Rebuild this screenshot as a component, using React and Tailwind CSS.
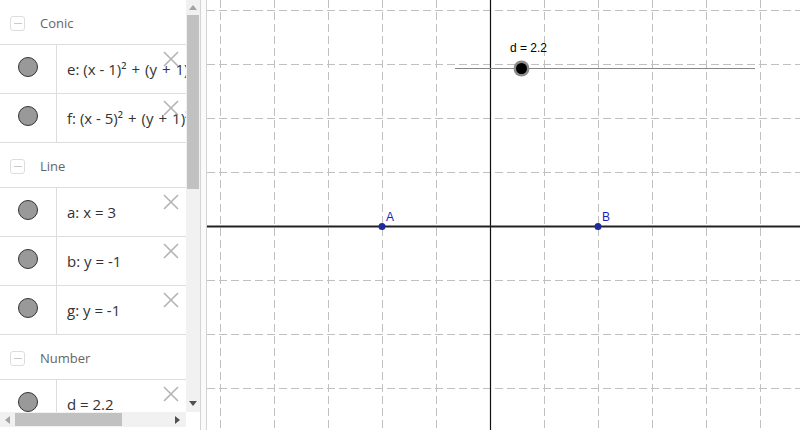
import React from 'react';

const FONT = { fontFamily: '"Open Sans", "Noto Sans", sans-serif' };

const GroupHeader = ({ title }) => (
    <div className="flex h-[45px] items-center border-b border-[#ddd] pt-[3px]">
        <div className="ml-[10px] flex h-[15px] w-[15px] items-center justify-center rounded-[3px] border border-[#ddd]">
            <div className="h-[1.5px] w-[8px] bg-[#c8c8c8]" />
        </div>
        <span className="ml-[15px] text-[13px] text-[#666]">{title}</span>
    </div>
);

const CloseIcon = () => (
    <svg className="absolute right-[7px] top-[6px]" width="16" height="16" viewBox="0 0 16 16">
        <path d="M1 1 L15 15 M15 1 L1 15" stroke="#b4b4b4" strokeWidth="1.6" fill="none" />
    </svg>
);

const ItemRow = ({ label }) => (
    <div className="relative flex h-[49px] border-b border-[#ddd]">
        <div className="flex w-[57px] shrink-0 justify-center border-r border-[#ddd] pt-[12px]">
            <div className="h-[20px] w-[20px] rounded-full border border-[#333] bg-[#999]" />
        </div>
        <div className="flex items-center whitespace-nowrap pl-[10px] text-[15px] text-[#333]">{label}</div>
        <CloseIcon />
    </div>
);

const Triangle = ({ dir, color }) => {
    const pts = {
        up: '0,5 4,0 8,5',
        down: '0,0 8,0 4,5',
        left: '5,0 5,8 0,4',
        right: '0,0 0,8 5,4',
    }[dir];
    const horiz = dir === 'left' || dir === 'right';
    return (
        <svg width={horiz ? 5 : 8} height={horiz ? 8 : 5} viewBox={horiz ? '0 0 5 8' : '0 0 8 5'}>
            <polygon points={pts} fill={color} />
        </svg>
    );
};

// wider spacing round the plus, like the math layout in the reference
const Plus = () => <span className="mx-[5px]">+</span>;

const AlgebraPanel = () => (
    <div className="flex h-[430px] w-[200px] shrink-0 flex-col bg-white" style={FONT}>
        <div className="flex h-[412px]">
            <div className="w-[186px] overflow-hidden">
                <GroupHeader title="Conic" />
                <ItemRow label={<>e: (x - 1)²<Plus />(y<Plus />1)² = 4</>} />
                <ItemRow label={<>f: (x - 5)²<Plus />(y<Plus />1)² = 4</>} />
                <GroupHeader title="Line" />
                <ItemRow label="a: x = 3" />
                <ItemRow label="b: y = -1" />
                <ItemRow label="g: y = -1" />
                <GroupHeader title="Number" />
                <ItemRow label="d = 2.2" />
            </div>
            <div className="flex w-[14px] flex-col bg-[#f1f1f1]">
                <div className="flex h-[15px] items-center justify-center">
                    <Triangle dir="up" color="#a3a3a3" />
                </div>
                <div className="flex-1 px-[1px]">
                    <div className="h-[174px] w-full bg-[#c1c1c1]" />
                </div>
                <div className="flex h-[15px] items-center justify-center pb-[3px]">
                    <Triangle dir="down" color="#505050" />
                </div>
            </div>
        </div>
        <div className="flex h-[15px]">
            <div className="flex w-[186px] items-center bg-[#f1f1f1]">
                <div className="flex w-[15px] justify-center">
                    <Triangle dir="left" color="#a3a3a3" />
                </div>
                <div className="h-[13px] w-[107px] bg-[#c1c1c1]" />
                <div className="flex-1" />
                <div className="flex w-[15px] justify-center pr-[3px]">
                    <Triangle dir="right" color="#505050" />
                </div>
            </div>
            <div className="w-[14px] bg-white" />
        </div>
    </div>
);

const GraphicsView = () => {
    const W = 593;
    const H = 430;
    const ox = 283.5;
    const oy = 226.5;
    const u = 54;
    const xs = [];
    for (let k = -5; k <= 6; k++) if (k !== 0) xs.push(ox + k * u);
    const ys = [];
    for (let k = -4; k <= 4; k++) if (k !== 0) ys.push(oy + k * u);

    return (
        <div className="h-[430px] flex-1 bg-white">
            <svg width={W} height={H} viewBox={`0 0 ${W} ${H}`}>
                {xs.map((x) => (
                    <line key={'v' + x} x1={x} y1="0" x2={x} y2={H} stroke="#c0c0c0" strokeWidth="1" strokeDasharray="8 4" />
                ))}
                {ys.map((y) => (
                    <line key={'h' + y} x1="0" y1={y} x2={W} y2={y} stroke="#c0c0c0" strokeWidth="1" strokeDasharray="8 4" />
                ))}
                <line x1={ox} y1="0" x2={ox} y2={H} stroke="#111" strokeWidth="1.2" />
                <line x1="0" y1={oy} x2={W} y2={oy} stroke="#222" strokeWidth="2" />

                <line x1="248" y1="68.5" x2="548" y2="68.5" stroke="#888" strokeWidth="1" />
                <circle cx="314.5" cy="68.5" r="8" fill="#8c8c8c" />
                <circle cx="314.5" cy="68.5" r="5.5" fill="#000" />
                <text x="303" y="52" fontSize="12" fill="#000" fontFamily='"Liberation Sans", Arial, sans-serif'>d = 2.2</text>

                <circle cx="175" cy={oy} r="3.5" fill="#1f2a9c" />
                <text x="179" y="221" fontSize="12" fill="#1e1ec0" fontFamily='"Liberation Sans", Arial, sans-serif'>A</text>
                <circle cx="391" cy={oy} r="3.5" fill="#1f2a9c" />
                <text x="395" y="221" fontSize="12" fill="#1e1ec0" fontFamily='"Liberation Sans", Arial, sans-serif'>B</text>
            </svg>
        </div>
    );
};

const App = () => (
    <div className="flex h-[430px] w-[800px] overflow-hidden bg-white">
        <AlgebraPanel />
        <div className="h-[430px] w-[7px] shrink-0 border-l border-r border-[#d4d4d4] bg-[#fafafa]" />
        <GraphicsView />
    </div>
);

export default App;
